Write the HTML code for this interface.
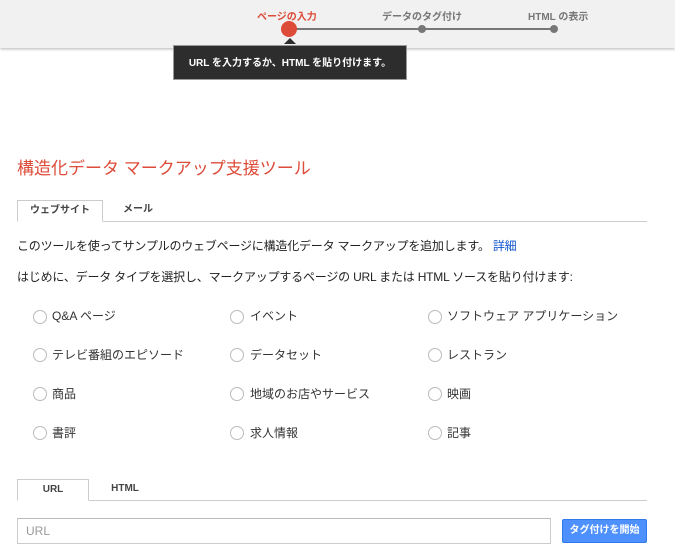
<!DOCTYPE html>
<html><head><meta charset="utf-8"><style>
body{margin:0;width:675px;height:558px;overflow:hidden;background:#fff;font-family:"Liberation Sans","Noto Sans CJK JP",sans-serif;color:#222;position:relative}
.hdr{position:absolute;left:0;top:0;width:675px;height:48px;background:#f1f1f1;box-shadow:0 1px 3px rgba(0,0,0,.3)}
.a{position:absolute;white-space:nowrap}
.lbl{font-size:10px;font-weight:bold;color:#777;top:8px}
.line{position:absolute;top:28px;left:289px;width:265px;height:2px;background:#777}
.dot{position:absolute;top:25px;width:8px;height:8px;border-radius:50%;background:#777}
.tip{position:absolute;left:173px;top:45px;width:234px;height:35px;background:#2d2d2d;color:#fff;font-size:10px;font-weight:bold;line-height:35px;text-align:center;border:1px solid #999;box-sizing:border-box}
.tab{position:absolute;font-size:10px;font-weight:bold;color:#444;text-align:center}
.radio{position:absolute;width:12px;height:12px;border:1px solid #bbb;border-radius:50%}
.opt{font-size:12px;color:#333}
</style></head><body>
<div class="hdr"></div>
<div class="a lbl" style="left:257px;color:#dd4b39">ページの入力</div>
<div class="a lbl" style="left:382px">データのタグ付け</div>
<div class="a lbl" style="left:528px">HTML の表示</div>
<div class="line"></div>
<div class="dot" style="left:418px"></div>
<div class="dot" style="left:550px"></div>
<div style="position:absolute;left:281px;top:21px;width:16px;height:16px;border-radius:50%;background:#dd4b39"></div>
<div style="position:absolute;left:284px;top:38px;border:6px solid transparent;border-bottom-color:#2d2d2d;border-top:0"></div>
<div class="tip">URL を入力するか、HTML を貼り付けます。</div>

<div class="a" style="left:17px;top:154px;font-size:17px;color:#dd4b39">構造化データ マークアップ支援ツール</div>
<div style="position:absolute;left:17px;top:221px;width:630px;height:1px;background:#ccc"></div>
<div class="tab" style="left:17px;top:200px;width:86px;border:1px solid #ccc;border-bottom:1px solid #fff;background:#fff;line-height:20px;box-sizing:border-box;height:22px">ウェブサイト</div>
<div class="tab" style="left:108px;top:200px;width:60px;line-height:20px">メール</div>
<div class="a" style="left:17px;top:237px;font-size:12px;letter-spacing:-0.2px">このツールを使ってサンプルのウェブページに構造化データ マークアップを追加します。 <span style="color:#15c">詳細</span></div>
<div class="a" style="left:17px;top:268px;font-size:12px;letter-spacing:-0.2px">はじめに、データ タイプを選択し、マークアップするページの URL または HTML ソースを貼り付けます:</div>

<div class="radio" style="left:33px;top:310px"></div><div class="a opt" style="left:52px;top:307px">Q&amp;A ページ</div>
<div class="radio" style="left:230px;top:310px"></div><div class="a opt" style="left:250px;top:307px">イベント</div>
<div class="radio" style="left:428px;top:310px"></div><div class="a opt" style="left:447px;top:307px">ソフトウェア アプリケーション</div>
<div class="radio" style="left:33px;top:348px"></div><div class="a opt" style="left:52px;top:346px">テレビ番組のエピソード</div>
<div class="radio" style="left:230px;top:348px"></div><div class="a opt" style="left:250px;top:346px">データセット</div>
<div class="radio" style="left:428px;top:348px"></div><div class="a opt" style="left:447px;top:346px">レストラン</div>
<div class="radio" style="left:33px;top:387px"></div><div class="a opt" style="left:52px;top:385px">商品</div>
<div class="radio" style="left:230px;top:387px"></div><div class="a opt" style="left:250px;top:385px">地域のお店やサービス</div>
<div class="radio" style="left:428px;top:387px"></div><div class="a opt" style="left:447px;top:385px">映画</div>
<div class="radio" style="left:33px;top:426px"></div><div class="a opt" style="left:52px;top:424px">書評</div>
<div class="radio" style="left:230px;top:426px"></div><div class="a opt" style="left:250px;top:424px">求人情報</div>
<div class="radio" style="left:428px;top:426px"></div><div class="a opt" style="left:447px;top:424px">記事</div>

<div style="position:absolute;left:17px;top:500px;width:630px;height:1px;background:#ccc"></div>
<div class="tab" style="left:17px;top:479px;width:72px;height:22px;border:1px solid #ccc;border-bottom:1px solid #fff;background:#fff;line-height:20px;box-sizing:border-box">URL</div>
<div class="tab" style="left:95px;top:479px;width:60px;line-height:20px">HTML</div>
<div style="position:absolute;left:17px;top:518px;width:534px;height:26px;border:1px solid #ccc;border-top-color:#bbb;box-sizing:border-box;font-size:12px;color:#999;padding-left:8px;line-height:24px">URL</div>
<div style="position:absolute;left:562px;top:519px;width:85px;height:24px;background:#4d90fe;border:1px solid #3079ed;box-sizing:border-box;border-radius:2px;color:#fff;font-size:10px;font-weight:bold;text-align:center;line-height:22px">タグ付けを開始</div>
</body></html>
